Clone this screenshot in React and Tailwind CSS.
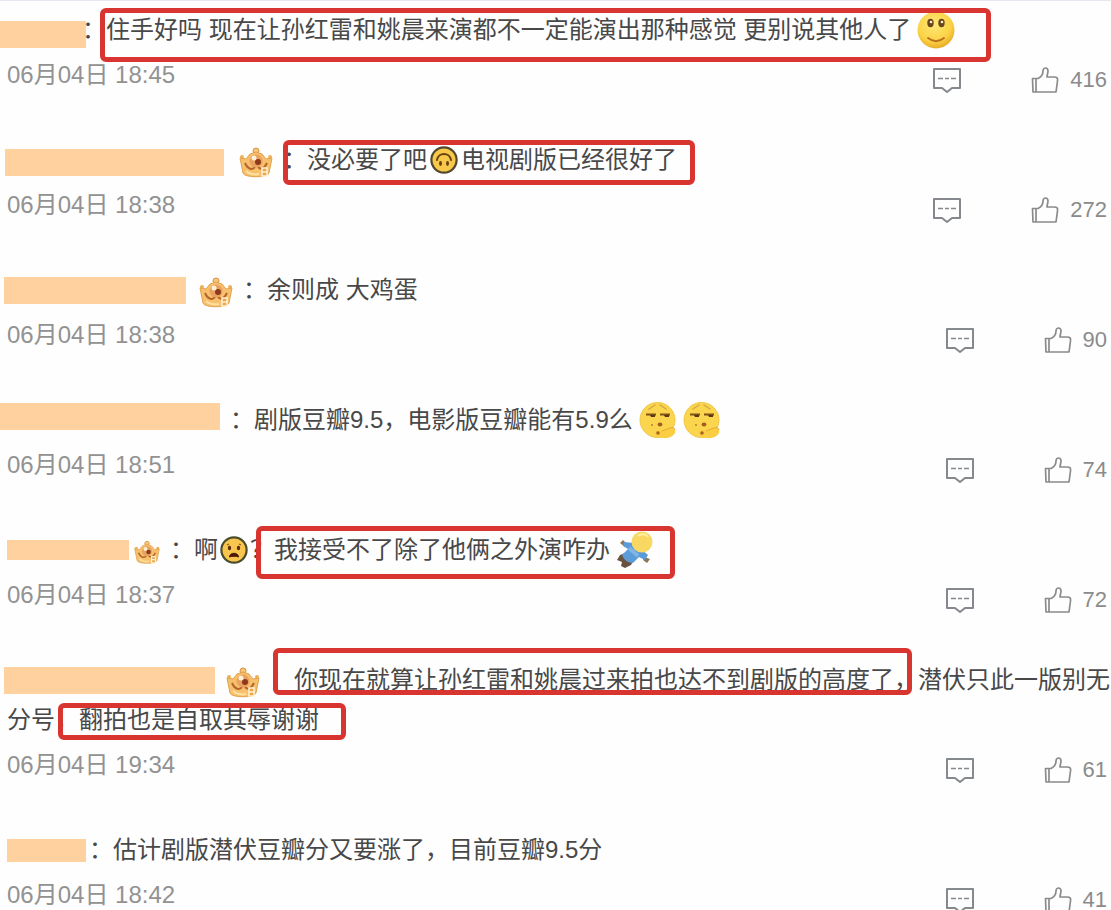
import clsx from 'clsx';

function Crown({ className }) {
  return (
    <svg viewBox="0 0 34 34" className={clsx('shrink-0 mr-[10px] mt-1', className)} aria-hidden="true">
      <circle cx="17" cy="6" r="3" fill="#f6c67c" stroke="#d9933f" />
      <circle cx="3" cy="12" r="2" fill="#eeb057" />
      <circle cx="31" cy="12" r="2" fill="#eeb057" />
      <path d="M1 13l6 1 4-5 6-2 6 2 4 5 6-1-3 15c-1 5-25 5-26 0z" fill="#f6c06c" stroke="#e2a24d" />
      <path d="M6 18c3 7 8 7 10 4M28 18c-3 6-6 7-9 4" fill="none" stroke="#b5652a" strokeWidth="2" />
      <circle cx="17" cy="16" r="6.500" fill="#e9a060" />
      <circle cx="19" cy="17" r="3" fill="#8b3a1c" />
      <circle cx="15" cy="13" r="2.500" fill="#fff0d3" />
      <path d="M7 26c3 3 9 4 13 3" fill="none" stroke="#ffe0a1" strokeWidth="2" />
      <path d="M23 23h5v8h-5zM23 27h5" fill="#e8a54b" stroke="#fff1d2" strokeWidth="1.5" />
    </svg>
  );
}

function Smile() {
  return (
    <svg viewBox="0 0 38 38" className="w-[38px] h-[38px] ml-[6px] shrink-0" role="img" aria-label="微笑">
      <defs>
        <radialGradient id="smileFace" cx="45%" cy="35%" r="65%">
          <stop offset="0" stopColor="#ffe878" />
          <stop offset="0.7" stopColor="#fbd244" />
          <stop offset="1" stopColor="#e9ac28" />
        </radialGradient>
      </defs>
      <circle cx="19" cy="19" r="18.500" fill="url(#smileFace)" />
      <ellipse cx="13.5" cy="12" rx="3.2" ry="4.2" fill="#69451c" />
      <ellipse cx="24.5" cy="12" rx="3.2" ry="4.2" fill="#69451c" />
      <circle cx="14" cy="11" r="1.3" fill="#fff3c8" />
      <circle cx="25" cy="11" r="1.3" fill="#fff3c8" />
      <path d="M11 27c5 4 11 4 16 0" fill="none" stroke="#b9701c" strokeWidth="1.8" strokeLinecap="round" />
    </svg>
  );
}

function Thinking() {
  return (
    <svg viewBox="0 0 38 38" className="w-[38px] h-[38px] ml-[6px] shrink-0" role="img" aria-label="思考">
      <circle cx="18.5" cy="19" r="17.5" fill="#fad54d" stroke="#f2c747" />
      <path d="M10 8l6-4M21 4l6 4" stroke="#d2aa45" strokeWidth="1.5" strokeLinecap="round" />
      <path d="M7 13.500h10M21 13.500h10" stroke="#805218" strokeWidth="2" />
      <path d="M11 14h5v2h-4zM25 14h5v2h-4z" fill="#5a3713" />
      <circle cx="13" cy="24" r="1" fill="#b77f2a" />
      <ellipse cx="21" cy="23.500" rx="2.4" ry="2" fill="#a65b20" />
      <path d="M17 35c-2-4 0-7 4-5l10-3c4-1 6 2 5 5-3 5-10 7-19 3z" fill="#fbcd42" />
      <path d="M23 30l8-3c3-1 5 0 5 2" fill="none" stroke="#e5ac35" />
      <circle cx="19" cy="32" r="1.8" fill="#a8661f" />
    </svg>
  );
}

function UpsideDown() {
  return (
    <svg viewBox="0 0 28 28" className="w-7 h-7 mx-[3px] shrink-0" role="img" aria-label="倒脸">
      <circle cx="14" cy="14" r="12.6" fill="#f8c84b" stroke="#51482f" strokeWidth="2.2" />
      <path d="M7 14c1-8 13-8 14 0" fill="none" stroke="#68420f" strokeWidth="2" strokeLinecap="round" />
      <ellipse cx="10.5" cy="17.5" rx="1.5" ry="2.4" fill="#68420f" />
      <ellipse cx="17.5" cy="17.5" rx="1.5" ry="2.4" fill="#68420f" />
    </svg>
  );
}

function Frowning() {
  return (
    <svg viewBox="0 0 28 28" className="w-7 h-7 mx-[2px] shrink-0" role="img" aria-label="惊讶">
      <circle cx="14" cy="14" r="12.6" fill="#f8c64e" stroke="#4a4c2c" strokeWidth="2.2" />
      <path d="M7 9l2-1M21 9l-2-1" stroke="#8a5a20" strokeWidth="1.2" />
      <ellipse cx="9.5" cy="12" rx="1.7" ry="2.2" fill="#5d2c10" />
      <ellipse cx="18.5" cy="12" rx="1.7" ry="2.2" fill="#5d2c10" />
      <path d="M9.500 21c0-5 9-5 9 0-2-1-7-1-9 0z" fill="#4d1708" stroke="#4d1708" />
    </svg>
  );
}

function Falling() {
  return (
    <svg viewBox="0 0 38 38" className="w-[38px] h-[38px] ml-[6px] shrink-0" role="img" aria-label="摔倒">
      <path d="M4 24l5-2 9 6-3 6-6 3-4-2 1-4-5-2z" fill="#69533f" />
      <path d="M4 12l3-3 4 4-2 3zM28 26l6 2-3 4-4-3z" fill="#8a7556" />
      <path d="M8 11l10 1 14 12-3 5-6-3-6 6c-5 0-9-3-11-8l6-6-5-3z" fill="#5b9bd8" />
      <path d="M13 17l9 8" stroke="#7fb5e6" strokeWidth="4" />
      <circle cx="26" cy="11" r="10.500" fill="#f9d763" />
      <path d="M22 5c3-3 8-2 10 1" fill="none" stroke="#fff0a3" strokeWidth="2" />
    </svg>
  );
}

function CommentIcon() {
  return (
    <svg viewBox="0 0 30 27" className="w-[30px] h-[27px]" fill="none" stroke="#85898d" strokeWidth="2" aria-hidden="true">
      <path d="M2 2h26v19h-8l-5 4-5-4H2z" strokeLinejoin="round" />
      <path d="M6 11.500h5M13 11.500h4M19 11.500h5" strokeWidth="1.600" />
    </svg>
  );
}

function ThumbIcon() {
  return (
    <svg viewBox="0 0 28 28" className="w-7 h-7" fill="none" stroke="#8b8b8b" strokeWidth="1.700" strokeLinejoin="round" aria-hidden="true">
      <path d="M1.500 12.500H5V26H2zM5 12.500h2C10 11 12 8 12 5c0-4 5-4 5 0 0 2-1 4-1 6h7c3 0 4 1 3.500 4L25 26H5" />
    </svg>
  );
}

// Blocked-out user name
function Name({ className }) {
  return <span className={clsx('bg-[#fed19f] shrink-0', className)} />;
}

// Text with a red frame drawn over it
function Marked({ frame, children }) {
  return (
    <span className="relative flex items-center h-10">
      {children}
      <span className={clsx('absolute border-[5px] border-[#d93530] rounded-md pointer-events-none', frame)} />
    </span>
  );
}

const COMMENTS = [
  {
    time: '06月04日 18:45',
    likes: 416,
    lines: [
      <>
        <Name className="w-[86px] h-[27px] mt-2" />
        <span className="-ml-1">：</span>
        <Marked frame="-top-[2px] -bottom-[12px] -left-[6px] -right-[36px]">
          住手好吗 现在让孙红雷和姚晨来演都不一定能演出那种感觉 更别说其他人了
          <Smile />
        </Marked>
      </>,
    ],
  },
  {
    time: '06月04日 18:38',
    likes: 272,
    lines: [
      <>
        <Name className="w-[219px] h-[27px] ml-[5px] mt-1" />
        <Crown className="w-[34px] h-[34px] ml-[15px]" />
        <Marked frame="top-0 -bottom-[5px] left-0 -right-[18px]">
          ：没必要了吧
          <UpsideDown />
          电视剧版已经很好了
        </Marked>
      </>,
    ],
  },
  {
    time: '06月04日 18:38',
    likes: 90,
    lines: [
      <>
        <Name className="w-[182px] h-[27px] ml-1" />
        <Crown className="w-[34px] h-[34px] ml-[13px]" />
        ：余则成 大鸡蛋
      </>,
    ],
  },
  {
    time: '06月04日 18:51',
    likes: 74,
    lines: [
      <>
        <Name className="w-[220px] h-[27px] mb-2" />
        <span className="ml-[10px]">：剧版豆瓣9.5，电影版豆瓣能有5.9么</span>
        <Thinking />
        <Thinking />
      </>,
    ],
  },
  {
    time: '06月04日 18:37',
    likes: 72,
    lines: [
      <>
        <Name className="w-[122px] h-[20px] ml-[7px]" />
        <Crown className="w-[26px] h-[34px] ml-[5px]" />
        ：啊
        <Frowning />
        ？
        <Marked frame="-top-[4px] -bottom-[9px] -left-[18px] -right-[21px]">
          我接受不了除了他俩之外演咋办
          <Falling />
        </Marked>
      </>,
    ],
  },
  {
    time: '06月04日 19:34',
    likes: 61,
    lines: [
      <>
        <Name className="w-[211px] h-[27px] ml-1" />
        <Crown className="w-[34px] h-[34px] ml-[11px]" />
        ：
        <Marked frame="-top-[12px] bottom-[5px] -left-[21px] right-[6px]">
          你现在就算让孙红雷和姚晨过来拍也达不到剧版的高度了，
        </Marked>
        潜伏只此一版别无
      </>,
      <>
        <span className="ml-[7px]">分号，</span>
        <Marked frame="top-[3px] bottom-0 -left-[21px] -right-[27px]">翻拍也是自取其辱谢谢</Marked>
      </>,
    ],
  },
  {
    time: '06月04日 18:42',
    likes: 41,
    lines: [
      <>
        <Name className="w-[79px] h-[23px] ml-[7px]" />
        <span className="ml-[3px]">：估计剧版潜伏豆瓣分又要涨了，目前豆瓣9.5分</span>
      </>,
    ],
  },
];

function Comment({ comment }) {
  return (
    <article className="mb-10">
      {comment.lines.map((line, i) => (
        <div key={i} className="flex items-center h-10 whitespace-nowrap">
          {line}
        </div>
      ))}
      <div className="h-[50px] flex items-center justify-between pl-[7px] pr-1">
        <time className="text-[#929292]">{comment.time}</time>
        <div className="flex items-center gap-[69px] pt-[10px]">
          <button type="button" aria-label="评论">
            <CommentIcon />
          </button>
          <button type="button" className="flex items-center gap-[11px] text-[22px] leading-7 text-[#8b8b8b]">
            <ThumbIcon />
            {comment.likes}
          </button>
        </div>
      </div>
    </article>
  );
}

export default function App() {
  return (
    <main className="h-screen overflow-hidden bg-[#fefefe] border-t border-r border-t-[#e8e6ee] border-r-[#d4d4d4] pt-[9px] text-[24px] leading-10 text-[#484848] font-['Liberation_Sans','Noto_Sans_CJK_SC',sans-serif]">
      {COMMENTS.map((comment, i) => (
        <Comment key={i} comment={comment} />
      ))}
    </main>
  );
}
